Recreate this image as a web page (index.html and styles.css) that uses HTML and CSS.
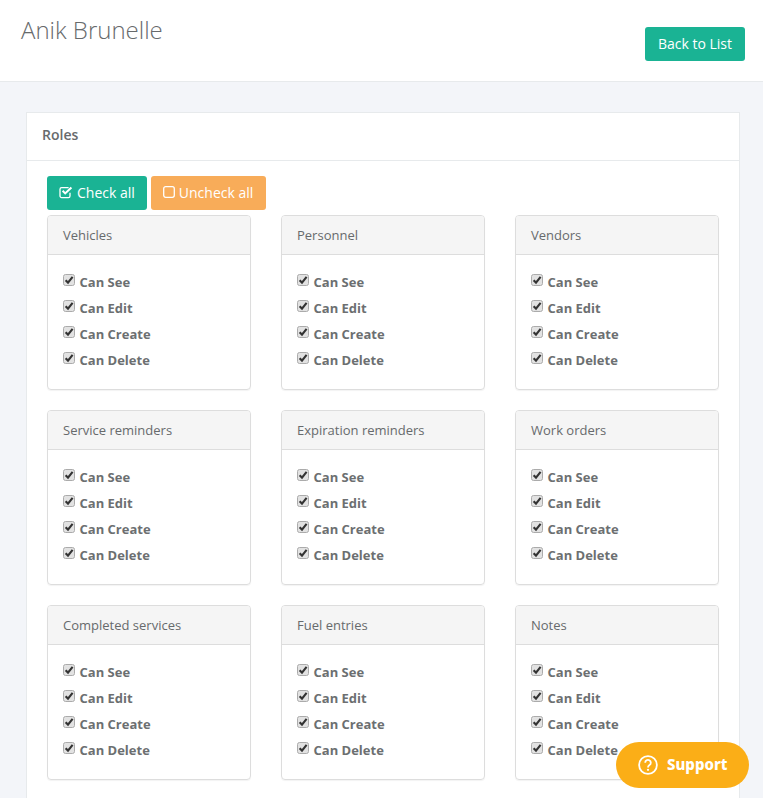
FILE: index.html
```html
<!DOCTYPE html>
<html lang="en">
<head>
<meta charset="utf-8">
<title>Anik Brunelle</title>
<link rel="stylesheet" href="styles.css">
</head>
<body>
<svg class="defs" width="0" height="0" aria-hidden="true">
  <symbol id="cb" viewBox="0 0 12 12">
    <rect x="0.5" y="0.5" width="11" height="11" rx="2" fill="#e2e2e2" stroke="#ababab"/>
    <path d="M2.6 6.2 L5 8.6 L9.6 2.8" fill="none" stroke="#333" stroke-width="2.1"/>
  </symbol>
</svg>
<header class="page-head">
  <h1 class="title">Anik Brunelle</h1>
  <a class="btn btn-green back">Back to List</a>
</header>
<main class="content">
  <section class="ibox">
    <div class="ibox-title">Roles</div>
    <div class="ibox-body">
      <div class="actions">
        <button class="btn btn-green btn-icon btn-check">
          <svg class="ico" viewBox="0 0 14 14"><path d="M11 7.8V11a1.6 1.6 0 0 1-1.6 1.6H2.6A1.6 1.6 0 0 1 1 11V4.2a1.6 1.6 0 0 1 1.6-1.6h7" fill="none" stroke="#fff" stroke-width="1.3"/><path d="M3.6 5.8 L6.2 8.4 L12.4 2.4" fill="none" stroke="#fff" stroke-width="2.1"/></svg>
          Check all</button>
        <button class="btn btn-orange btn-icon">
          <svg class="ico ico-box" viewBox="0 0 12 12"><rect x="0.7" y="0.7" width="10.6" height="10.6" rx="2" fill="none" stroke="#fff" stroke-width="1.3"/></svg>
          Uncheck all</button>
      </div>
      <div class="grid">
        <article class="panel"><div class="panel-head">Vehicles</div><div class="panel-body">
          <label class="row"><svg class="cb"><use href="#cb"/></svg>Can See</label>
          <label class="row"><svg class="cb"><use href="#cb"/></svg>Can Edit</label>
          <label class="row"><svg class="cb"><use href="#cb"/></svg>Can Create</label>
          <label class="row"><svg class="cb"><use href="#cb"/></svg>Can Delete</label>
        </div></article>
        <article class="panel"><div class="panel-head">Personnel</div><div class="panel-body">
          <label class="row"><svg class="cb"><use href="#cb"/></svg>Can See</label>
          <label class="row"><svg class="cb"><use href="#cb"/></svg>Can Edit</label>
          <label class="row"><svg class="cb"><use href="#cb"/></svg>Can Create</label>
          <label class="row"><svg class="cb"><use href="#cb"/></svg>Can Delete</label>
        </div></article>
        <article class="panel"><div class="panel-head">Vendors</div><div class="panel-body">
          <label class="row"><svg class="cb"><use href="#cb"/></svg>Can See</label>
          <label class="row"><svg class="cb"><use href="#cb"/></svg>Can Edit</label>
          <label class="row"><svg class="cb"><use href="#cb"/></svg>Can Create</label>
          <label class="row"><svg class="cb"><use href="#cb"/></svg>Can Delete</label>
        </div></article>
        <article class="panel"><div class="panel-head">Service reminders</div><div class="panel-body">
          <label class="row"><svg class="cb"><use href="#cb"/></svg>Can See</label>
          <label class="row"><svg class="cb"><use href="#cb"/></svg>Can Edit</label>
          <label class="row"><svg class="cb"><use href="#cb"/></svg>Can Create</label>
          <label class="row"><svg class="cb"><use href="#cb"/></svg>Can Delete</label>
        </div></article>
        <article class="panel"><div class="panel-head">Expiration reminders</div><div class="panel-body">
          <label class="row"><svg class="cb"><use href="#cb"/></svg>Can See</label>
          <label class="row"><svg class="cb"><use href="#cb"/></svg>Can Edit</label>
          <label class="row"><svg class="cb"><use href="#cb"/></svg>Can Create</label>
          <label class="row"><svg class="cb"><use href="#cb"/></svg>Can Delete</label>
        </div></article>
        <article class="panel"><div class="panel-head">Work orders</div><div class="panel-body">
          <label class="row"><svg class="cb"><use href="#cb"/></svg>Can See</label>
          <label class="row"><svg class="cb"><use href="#cb"/></svg>Can Edit</label>
          <label class="row"><svg class="cb"><use href="#cb"/></svg>Can Create</label>
          <label class="row"><svg class="cb"><use href="#cb"/></svg>Can Delete</label>
        </div></article>
        <article class="panel"><div class="panel-head">Completed services</div><div class="panel-body">
          <label class="row"><svg class="cb"><use href="#cb"/></svg>Can See</label>
          <label class="row"><svg class="cb"><use href="#cb"/></svg>Can Edit</label>
          <label class="row"><svg class="cb"><use href="#cb"/></svg>Can Create</label>
          <label class="row"><svg class="cb"><use href="#cb"/></svg>Can Delete</label>
        </div></article>
        <article class="panel"><div class="panel-head">Fuel entries</div><div class="panel-body">
          <label class="row"><svg class="cb"><use href="#cb"/></svg>Can See</label>
          <label class="row"><svg class="cb"><use href="#cb"/></svg>Can Edit</label>
          <label class="row"><svg class="cb"><use href="#cb"/></svg>Can Create</label>
          <label class="row"><svg class="cb"><use href="#cb"/></svg>Can Delete</label>
        </div></article>
        <article class="panel"><div class="panel-head">Notes</div><div class="panel-body">
          <label class="row"><svg class="cb"><use href="#cb"/></svg>Can See</label>
          <label class="row"><svg class="cb"><use href="#cb"/></svg>Can Edit</label>
          <label class="row"><svg class="cb"><use href="#cb"/></svg>Can Create</label>
          <label class="row"><svg class="cb"><use href="#cb"/></svg>Can Delete</label>
        </div></article>
      </div>
    </div>
  </section>
</main>
<a class="support">
  <svg class="help" viewBox="0 0 20 20"><circle cx="10" cy="10" r="8.9" fill="none" stroke="#fff" stroke-width="1.8"/><path d="M7.2 7.8a2.8 2.8 0 1 1 4.3 2.3c-1 .7-1.5 1.1-1.5 2.3" fill="none" stroke="#fff" stroke-width="1.8"/><circle cx="10" cy="14.8" r="1.15" fill="#fff"/></svg>
  <span class="support-text">Support</span>
</a>
</body>
</html>
```

FILE: styles.css
```css
html, body {
  margin: 0;
  height: 798px;
  overflow: hidden;
}
body {
  background: #f3f5f9;
  color: #676a6c;
  font-family: "Open Sans", "Liberation Sans", sans-serif;
  font-size: 13px;
}
.defs {
  position: absolute;
}
.page-head {
  display: flex;
  justify-content: space-between;
  align-items: flex-start;
  height: 81px;
  background: #fff;
  border-bottom: 1px solid #e7eaec;
  padding: 0 18px 0 21px;
}
.title {
  margin: 13px 0 0;
  font-size: 24px;
  line-height: 33px;
  font-weight: 300;
}
.back {
  margin-top: 27px;
}
.btn {
  display: inline-flex;
  align-items: center;
  height: 34px;
  box-sizing: border-box;
  border: 0;
  border-radius: 3px;
  color: #fff;
  font-family: inherit;
  font-size: 14px;
  padding: 0 13px 2px;
}
.btn-icon {
  padding-left: 12px;
}
.btn-check {
  padding-right: 12px;
}
.btn-green {
  background: #1ab394;
}
.btn-orange {
  background: #f8ac59;
}
.content {
  padding: 30px 23px 0 26px;
}
.ibox {
  background: #fff;
  border: 1px solid #e7eaec;
}
.ibox-title {
  height: 47px;
  line-height: 44px;
  padding-left: 15px;
  font-size: 14px;
  font-weight: 600;
  border-bottom: 1px solid #e7eaec;
}
.ibox-body {
  padding: 15px 20px 40px;
}
.actions {
  display: flex;
  gap: 4px;
  margin-bottom: 5px;
}
.ico {
  width: 14px;
  height: 14px;
  margin-right: 4px;
}
.ico-box {
  width: 12px;
  height: 12px;
  margin-right: 4px;
}
.grid {
  display: grid;
  grid-template-columns: repeat(3, 204px);
  column-gap: 30px;
  row-gap: 20px;
}
.panel {
  height: 175px;
  box-sizing: border-box;
  border: 1px solid #ddd;
  border-radius: 4px;
  box-shadow: 0 1px 1px rgba(0, 0, 0, .05);
}
.panel-head {
  height: 38px;
  line-height: 38px;
  padding-left: 15px;
  background: #f5f5f5;
  border-bottom: 1px solid #ddd;
  border-radius: 3px 3px 0 0;
}
.panel-body {
  padding: 14px 15px 0;
}
.row {
  display: flex;
  align-items: center;
  height: 26px;
  font-weight: 700;
  color: #6c6f71;
}
.cb {
  width: 12px;
  height: 12px;
  margin: -5px 4.5px 0 0;
}
.support {
  position: fixed;
  left: 616px;
  top: 742px;
  width: 133px;
  height: 46px;
  box-sizing: border-box;
  padding-left: 22px;
  display: flex;
  align-items: center;
  gap: 9px;
  background: #fbae17;
  border-radius: 23px;
  color: #fff;
  font-family: "Noto Sans", "Open Sans", sans-serif;
  font-size: 15px;
  font-weight: 800;
}
.help {
  width: 20px;
  height: 20px;
}
.support-text {
  margin-top: -2px;
}
```
